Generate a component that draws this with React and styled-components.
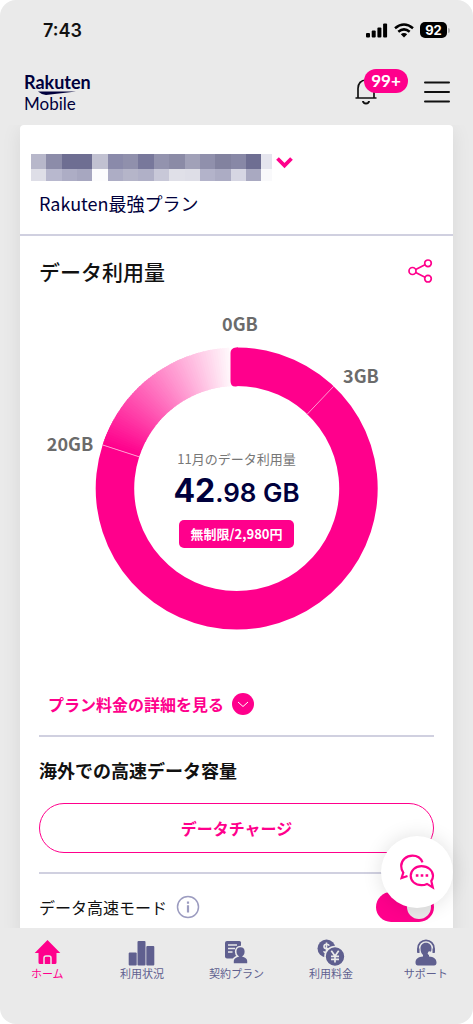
// Libraries
import React, { useState } from 'react';
import styled, { createGlobalStyle } from 'styled-components';

// Colors
const pink = '#ff008c';
const navy = '#00003c';
const slate = '#5f5f8f';
const lineColor = '#d0d0e0';
const pageColor = '#eaeaea';
const labelColor = '#6b6b6b';

const GlobalStyle = createGlobalStyle`
  * {
    box-sizing: border-box;
  }
  body {
    margin: 0;
    background: white;
    font-family: 'Noto Sans CJK JP', sans-serif;
    color: #111;
  }
  button {
    font-family: inherit;
    border: 0;
    padding: 0;
    background: none;
    cursor: pointer;
  }
  h2, h3, p {
    margin: 0;
  }
  svg {
    display: block;
  }
`

const Screen = styled.div`
  display: flex;
  flex-direction: column;
  height: 100vh;
  background: ${pageColor};
  border-radius: 16px;
  overflow: hidden;
`

const StatusBar = styled.div`
  display: flex;
  align-items: center;
  justify-content: space-between;
  flex-shrink: 0;
  height: 60px;
  padding: 0 23px 0 43px;
`

const Clock = styled.div`
  font-family: 'Inter', sans-serif;
  font-size: 18px;
  font-weight: 600;
`

const StatusIcons = styled.div`
  display: flex;
  align-items: center;
  gap: 6px;
`

const Battery = styled.div`
  display: flex;
  align-items: center;
  gap: 1px;
`

const BatteryLevel = styled.div`
  width: 27px;
  height: 16px;
  border-radius: 5px;
  background: black;
  color: white;
  font-family: 'Inter', sans-serif;
  font-size: 13px;
  font-weight: 700;
  line-height: 16px;
  text-align: center;
`

const BatteryTip = styled.div`
  width: 2px;
  height: 5px;
  border-radius: 0 2px 2px 0;
  background: #b0b0b0;
`

const Header = styled.header`
  display: flex;
  align-items: center;
  justify-content: space-between;
  flex-shrink: 0;
  height: 65px;
  padding: 0 23px 0 24px;
`

const Logo = styled.a`
  display: block;
  font-family: 'Lato', sans-serif;
  font-size: 17px;
  line-height: 17px;
  color: ${navy};
  text-decoration: none;
`

const LogoName = styled.div`
  font-size: 18px;
  font-weight: 700;
`

const Swoosh = styled.svg`
  margin-left: 14px;
`

const HeaderActions = styled.div`
  display: flex;
  align-items: center;
  gap: 47px;
`

const BellButton = styled.button`
  position: relative;
`

const Count = styled.span`
  position: absolute;
  top: -10px;
  left: 9px;
  width: 44px;
  height: 24px;
  border-radius: 12px;
  background: ${pink};
  color: white;
  font-family: 'Lato', sans-serif;
  font-size: 17px;
  font-weight: 700;
  line-height: 24px;
`

const Main = styled.main`
  position: relative;
  flex: 1;
  min-height: 0;
`

const Scroller = styled.div`
  height: 100%;
  overflow-y: auto;
  scrollbar-width: none;
  padding: 0 20px;
`

const Card = styled.div`
  background: white;
  border-radius: 4px 4px 0 0;
  box-shadow: 0 4px 20px rgba(0, 0, 0, 0.08);
`

const Account = styled.div`
  padding: 29px 11px 18px;
  border-bottom: 2px solid ${lineColor};
`

const AccountButton = styled.button`
  display: flex;
  align-items: flex-start;
  gap: 4px;
`

const ChevronIcon = styled.svg`
  margin-top: 3px;
`

const PlanName = styled.p`
  margin-top: 9px;
  padding-left: 8px;
  font-size: 18px;
  line-height: 26px;
  color: ${navy};
`

const Section = styled.section`
  padding: 0 19px;
`

const TitleRow = styled.div`
  display: flex;
  align-items: center;
  justify-content: space-between;
  height: 70px;
`

const Title = styled.h2`
  font-size: 21px;
  font-weight: 500;
  line-height: 28px;
`

const Chart = styled.div`
  display: grid;
  justify-content: center;

  & > * {
    grid-area: 1 / 1;
  }
`

const Usage = styled.div`
  display: flex;
  flex-direction: column;
  align-items: center;
  padding-top: 143px;
`

const UsageLabel = styled.p`
  font-size: 13px;
  line-height: 20px;
  color: #777;
`

const UsageValue = styled.p`
  margin-top: 4px;
  font-family: 'Inter', sans-serif;
  font-size: 26px;
  font-weight: 600;
  line-height: 36px;
  color: ${navy};
`

const UsageWhole = styled.span`
  font-size: 32px;
  font-weight: 700;
`

const Price = styled.p`
  margin-top: 9px;
  padding: 0 12px;
  border-radius: 5px;
  background: ${pink};
  color: white;
  font-size: 13px;
  font-weight: 700;
  line-height: 28px;
`

const DetailsLink = styled.a`
  display: flex;
  align-items: center;
  gap: 8px;
  height: 44px;
  margin: 46px 0 9px;
  padding-left: 9px;
  color: ${pink};
  font-size: 16px;
  font-weight: 700;
  text-decoration: none;
`

const Divider = styled.hr`
  height: 2px;
  margin: 0;
  border: 0;
  background: ${lineColor};
`

const SubTitle = styled.h3`
  font-size: 18px;
  font-weight: 700;
  line-height: 66px;
`

const ChargeButton = styled.button`
  width: 100%;
  height: 50px;
  margin-bottom: 19px;
  border: 1px solid ${pink};
  border-radius: 25px;
  color: ${pink};
  font-size: 16px;
  font-weight: 700;
`

const ModeRow = styled.div`
  display: flex;
  align-items: center;
  height: 66px;
`

const ModeLabel = styled.label`
  font-size: 16px;
`

const InfoButton = styled.button`
  margin-left: 9px;
`

const Toggle = styled.input`
  appearance: none;
  display: flex;
  width: 58px;
  height: 30px;
  margin: 0 0 0 auto;
  padding: 3px;
  border-radius: 15px;
  background: ${props => props.checked ? pink : '#bbb'};
  justify-content: ${props => props.checked ? 'flex-end' : 'flex-start'};
  cursor: pointer;

  &::before {
    content: '';
    width: 24px;
    height: 24px;
    border-radius: 50%;
    background: ${pageColor};
  }
`

const ChatButton = styled.button`
  position: absolute;
  right: 20px;
  bottom: 20px;
  display: flex;
  align-items: center;
  justify-content: center;
  width: 72px;
  height: 72px;
  border-radius: 50%;
  background: white;
  box-shadow: 0 0 20px rgba(0, 0, 0, 0.12);
`

const TabBar = styled.nav`
  display: flex;
  flex-shrink: 0;
  height: 96px;
  padding-top: 11px;
`

const Tab = styled.a`
  display: flex;
  flex: 1;
  flex-direction: column;
  align-items: center;
  color: ${props => props.$active ? pink : slate};
  font-size: 11px;
  line-height: 12px;
  text-decoration: none;
`

// Masked phone number
const maskTop = ['#b7b7ca', '#8c8ca9', '#6e6e92', '#6e6e92', '#c1c1d1', '#8a8aaa', '#9090ac', '#78789b', '#9393ae', '#8b8ba6', '#a1a1b8', '#9090ac', '#82829f', '#8888a6', '#6e6e92', '#e5e5ee'];
const maskBottom = ['#dedee7', '#b8b8ce', '#adadc5', '#a7a7c0', '#fcfcfd', '#adadc5', '#b5b5c9', '#b0b0c7', '#c8c8d8', '#e0e0e8', '#dedee7', '#b3b3ca', '#acacc4', '#d6d6e3', '#a9a9c1', '#f9f9fb'];

const MaskedNumber = () => (
  <svg width="241" height="27" shapeRendering="crispEdges" role="img" aria-label="電話番号">
    {maskTop.map((fill, i) => <rect key={i} x={i * 15.35} y="0" width="15.5" height="15" fill={fill} />)}
    {maskBottom.map((fill, i) => <rect key={i} x={i * 15.35} y="15" width="15.5" height="12" fill={fill} />)}
  </svg>
);

// Donut geometry
const cx = 197.7;
const cy = 182.5;
const outer = 141;
const inner = 102.5;
const fadeStart = 288;
const fadeEnd = 357;

const point = (deg, r) => {
  const a = deg * Math.PI / 180;
  return [(cx + r * Math.sin(a)).toFixed(2), (cy - r * Math.cos(a)).toFixed(2)].join(' ');
};

const slice = (from, to) => {
  const large = to - from > 180 ? 1 : 0;
  return `M${point(from, outer)}A${outer} ${outer} 0 ${large} 1 ${point(to, outer)}L${point(to, inner)}A${inner} ${inner} 0 ${large} 0 ${point(from, inner)}Z`;
};

const fade = [];
for (let deg = fadeStart; deg < fadeEnd; deg++) {
  const t = (deg - fadeStart) / (fadeEnd - fadeStart);
  fade.push({ deg, color: `rgb(255, ${Math.round(250 * t)}, ${Math.round(140 + 112 * t)})` });
}

const Mark = ({ deg }) => {
  const [x1, y1] = point(deg, inner).split(' ');
  const [x2, y2] = point(deg, outer).split(' ');
  return <line x1={x1} y1={y1} x2={x2} y2={y2} stroke="#ff9bd2" strokeWidth="1" />;
};

const Donut = () => (
  <svg width="395" height="330" viewBox="0 0 395 330">
    {fade.map(({ deg, color }) => (
      <path key={deg} d={slice(deg, Math.min(deg + 1.6, fadeEnd))} fill={color} />
    ))}
    <path d={slice(0, fadeStart)} fill={pink} />
    <path d="M199 41.500H197Q191.500 42 191.500 47V75Q191.500 81 197 80.500L199 80Z" fill={pink} />
    <Mark deg={43.5} />
    <Mark deg={fadeStart} />
    <g fill={labelColor} fontSize="18" fontWeight="700" textAnchor="middle">
      <text x="201" y="25">0GB</text>
      <text x="322" y="77">3GB</text>
      <text x="31" y="145">20GB</text>
    </g>
  </svg>
);

const SignalIcon = () => (
  <svg width="22" height="15" viewBox="0 0 22 15">
    <rect x="0" y="10" width="4" height="4.500" rx="1" />
    <rect x="5.700" y="7.500" width="4" height="7" rx="1" />
    <rect x="11.400" y="4.500" width="4" height="10" rx="1" />
    <rect x="17.100" y="0.500" width="4" height="14" rx="1" />
  </svg>
);

const WifiIcon = () => (
  <svg width="20" height="15" viewBox="0 0 20 15" fill="none" stroke="black" strokeWidth="2.500">
    <path d="M1 5.300Q10 -2.300 19 5.300" />
    <path d="M4.300 8.800Q10 3.900 15.700 8.800" />
    <path d="M10 14.500L6.800 11.300Q10 8.600 13.200 11.300Z" fill="black" stroke="none" />
  </svg>
);

const BellIcon = () => (
  <svg width="22" height="27" viewBox="0 0 22 27" fill="none" stroke="#111" strokeWidth="1.700">
    <path d="M0.500 19H21.500" />
    <path d="M3 19V9.500C3 4.500 6 1 11 1S19 4.500 19 9.500V19" />
    <path d="M8 22C8.300 25.300 13.700 25.300 14 22" strokeWidth="2" />
  </svg>
);

const MenuIcon = () => (
  <svg width="26" height="24" viewBox="0 0 26 24" stroke="#111" strokeWidth="2" strokeLinecap="round">
    <path d="M1 1.500H25M1 11H25M1 20.500H25" />
  </svg>
);

const ShareIcon = () => (
  <svg width="26" height="24" viewBox="0 0 26 24" fill="none" stroke={pink} strokeWidth="1.700">
    <circle cx="4.500" cy="12" r="3.500" />
    <circle cx="20" cy="4.300" r="3.300" />
    <circle cx="20" cy="19.700" r="3.300" />
    <path d="M7.700 10.400L17 5.800M7.700 13.600L17 18.200" />
  </svg>
);

const InfoIcon = () => (
  <svg width="24" height="24" viewBox="0 0 24 24" fill="none" stroke="#9c9cc0">
    <circle cx="12" cy="12" r="10.500" strokeWidth="1.500" />
    <path d="M12 10.300V17.500M12 6.500V8.700" strokeWidth="2.200" />
  </svg>
);

const ChatIcon = () => (
  <svg width="36" height="36" viewBox="0 0 36 36" fill="none" stroke={pink} strokeWidth="2.200" strokeLinejoin="miter">
    <path d="M23.500 8.300C21.700 4 17.900 1.700 13.500 1.700C7.300 1.700 2.200 6.200 2.200 12C2.200 14.800 3 16.900 4.300 18.700L2.600 24L8.500 22" />
    <path d="M22.500 12.200C16.300 12.200 11.700 16.500 11.700 21.700C11.700 27.100 16.300 31.200 22.500 31.200C24.500 31.200 26.400 30.700 28 29.900L33.800 33.500L32.300 27C33.500 25.400 34 23.700 34 21.700C34 16.500 29 12.200 22.500 12.200Z" />
    <path d="M16.800 21.500H19.400M21.700 21.500H24.300M26.600 21.500H29.200" strokeWidth="2.600" />
  </svg>
);

const HomeIcon = () => (
  <svg width="27" height="28" viewBox="0 0 27 28">
    <path d="M13.500 1L26.300 14H22.500V23.500Q22.500 25 21 25H6Q4.500 25 4.500 23.500V14H0.700Z" fill={pink} />
    <path d="M10 25V19Q10 17 12 17H15Q17 17 17 19V25" fill="none" stroke={pageColor} strokeWidth="1.500" />
  </svg>
);

const BarsIcon = () => (
  <svg width="27" height="28" viewBox="0 0 27 28" fill={slate}>
    <rect x="0.700" y="13.500" width="8" height="13" rx="1" />
    <rect x="9.500" y="2" width="8" height="24.500" rx="1" />
    <rect x="18.300" y="7" width="8" height="19.500" rx="1" />
  </svg>
);

const ContractIcon = () => (
  <svg width="24" height="28" viewBox="0 0 24 28">
    <path d="M3 2H15.500Q17 2 17 3.500V19.500H3Q1 19.500 1 17.500V4Q1 2 3 2Z" fill={slate} />
    <path d="M4 6H13M4 9.500H11M4 13H8.500" stroke={pageColor} strokeWidth="1.500" />
    <path d="M16.500 7.500C13 7.500 11.500 10 11.700 13C11.800 15 12.500 16.500 13.500 17.200C11 18 9 19.500 9 22V25H24V22C24 19.500 22 18 19.700 17.200C20.700 16.500 21.300 15 21.400 13C21.500 10 20 7.500 16.500 7.500Z" fill={slate} stroke={pageColor} strokeWidth="1.600" />
  </svg>
);

const CoinsIcon = () => (
  <svg width="28" height="28" viewBox="0 0 28 28">
    <circle cx="9.500" cy="9.500" r="9" fill={slate} />
    <path d="M12.300 6.700Q11.600 5.300 9.500 5.300Q7 5.300 7 7.400T9.500 9.500T12.200 11.800T9.500 13.900Q7.200 13.900 6.600 12.300M9.500 3.500V15.500" fill="none" stroke={pageColor} strokeWidth="1.600" />
    <circle cx="18" cy="17.500" r="10" fill={slate} stroke={pageColor} strokeWidth="1.600" />
    <path d="M14.300 11.800L18 17L21.700 11.800M18 17V23.500M14 17.300H22M14 20.300H22" fill="none" stroke={pageColor} strokeWidth="1.700" />
  </svg>
);

const SupportIcon = () => (
  <svg width="24" height="28" viewBox="0 0 24 28">
    <path d="M4 13V9.500C4 5 7.500 1.300 12 1.300S20 5 20 9.500V13" fill="none" stroke={slate} strokeWidth="1.800" />
    <path d="M3.200 9.500H5.500V14H3.200ZM18.500 9.500H20.800V14H18.500Z" fill={slate} />
    <path d="M12 3.700C8.500 3.700 6.500 6.200 6.500 9.500C6.500 12.500 7.500 14.700 9 16V17.500C4.500 18 1.500 19.700 1.500 23.500Q1.500 26.500 4 26.500H20Q22.500 26.500 22.500 23.500C22.500 19.700 19.500 18 15 17.500V16C16.500 14.700 17.500 12.500 17.500 9.500C17.500 6.200 15.500 3.700 12 3.700Z" fill={slate} />
    <circle cx="15.700" cy="14.200" r="1.900" fill={pageColor} />
  </svg>
);

const tabs = [
  { name: 'ホーム', icon: <HomeIcon />, active: true },
  { name: '利用状況', icon: <BarsIcon /> },
  { name: '契約プラン', icon: <ContractIcon /> },
  { name: '利用料金', icon: <CoinsIcon /> },
  { name: 'サポート', icon: <SupportIcon /> },
];

const App = () => {
  const [fast, setFast] = useState(true);

  return (
    <Screen>
      <GlobalStyle />
      <StatusBar>
        <Clock>7:43</Clock>
        <StatusIcons>
          <SignalIcon />
          <WifiIcon />
          <Battery>
            <BatteryLevel>92</BatteryLevel>
            <BatteryTip />
          </Battery>
        </StatusIcons>
      </StatusBar>

      <Header>
        <Logo href="#">
          <LogoName>Rakuten</LogoName>
          <Swoosh width="40" height="4" viewBox="0 0 40 4">
            <path d="M0 0.500H38L8 4Q4 4 0 0.500Z" fill={navy} />
          </Swoosh>
          <div>Mobile</div>
        </Logo>
        <HeaderActions>
          <BellButton aria-label="お知らせ">
            <BellIcon />
            <Count>99+</Count>
          </BellButton>
          <button aria-label="メニュー"><MenuIcon /></button>
        </HeaderActions>
      </Header>

      <Main>
        <Scroller>
          <Card>
            <Account>
              <AccountButton>
                <MaskedNumber />
                <ChevronIcon width="17" height="12" viewBox="0 0 17 12" fill="none" stroke={pink} strokeWidth="3.800">
                  <path d="M1.500 1.500L8.500 8.500L15.500 1.500" />
                </ChevronIcon>
              </AccountButton>
              <PlanName>Rakuten最強プラン</PlanName>
            </Account>

            <Section>
              <TitleRow>
                <Title>データ利用量</Title>
                <button aria-label="共有"><ShareIcon /></button>
              </TitleRow>
              <Chart>
                <Donut />
                <Usage>
                  <UsageLabel>11月のデータ利用量</UsageLabel>
                  <UsageValue><UsageWhole>42</UsageWhole>.98 GB</UsageValue>
                  <Price>無制限/2,980円</Price>
                </Usage>
              </Chart>
              <DetailsLink href="#">
                プラン料金の詳細を見る
                <svg width="22" height="22" viewBox="0 0 22 22" fill="none" stroke="white" strokeWidth="1">
                  <circle cx="11" cy="11" r="11" fill={pink} stroke="none" />
                  <path d="M6 9L11 13.500L16 9" />
                </svg>
              </DetailsLink>
              <Divider />
              <SubTitle>海外での高速データ容量</SubTitle>
              <ChargeButton>データチャージ</ChargeButton>
              <Divider />
              <ModeRow>
                <ModeLabel htmlFor="fast-mode">データ高速モード</ModeLabel>
                <InfoButton aria-label="詳細"><InfoIcon /></InfoButton>
                <Toggle id="fast-mode" type="checkbox" checked={fast} onChange={() => setFast(!fast)} />
              </ModeRow>
            </Section>
          </Card>
        </Scroller>
        <ChatButton aria-label="チャット"><ChatIcon /></ChatButton>
      </Main>

      <TabBar>
        {tabs.map(tab => (
          <Tab key={tab.name} href="#" $active={tab.active}>
            {tab.icon}
            {tab.name}
          </Tab>
        ))}
      </TabBar>
    </Screen>
  );
};

export default App;
